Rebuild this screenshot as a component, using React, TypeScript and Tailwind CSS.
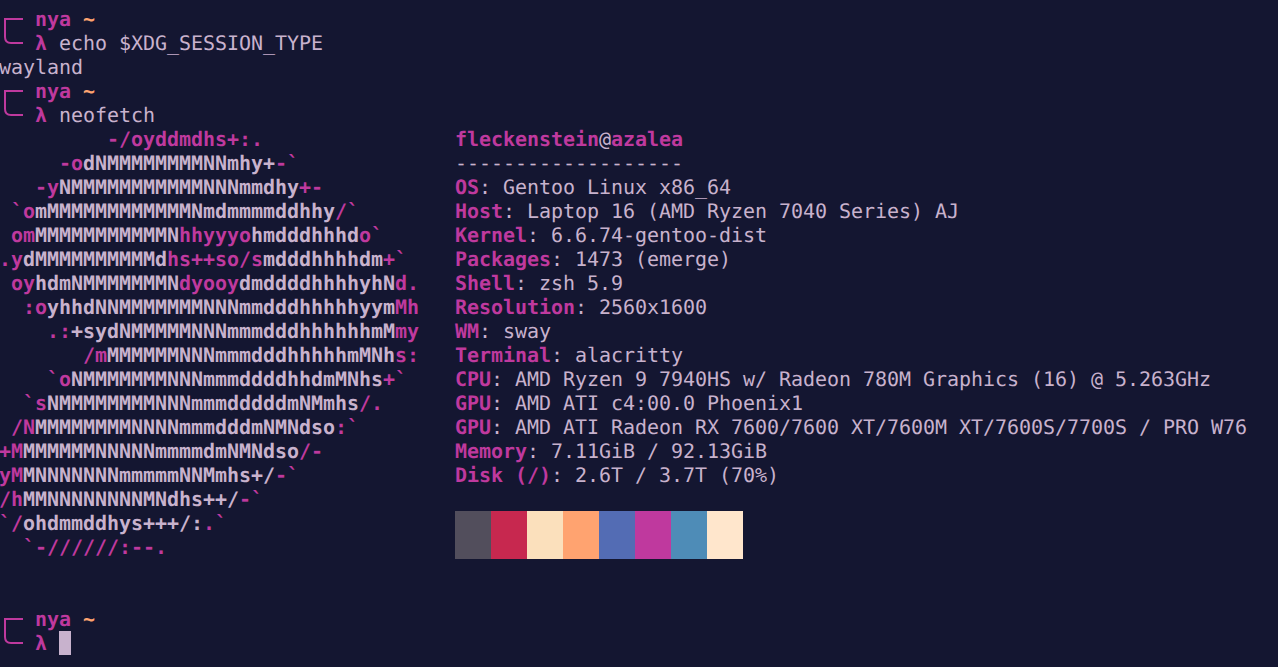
// terminal screenshot: alacritty running neofetch
const MONO = "font-['DejaVu_Sans_Mono',monospace]";

// "|" flips between logo colours, starts on the magenta one
const LOGO = [
  "         -/oyddmdhs+:.",
  "     -o|dNMMMMMMMMNNmhy+|-`",
  "   -y|NMMMMMMMMMMMNNNmmdhy|+-",
  " `o|mMMMMMMMMMMMMNmdmmmmddhhy|/`",
  " om|MMMMMMMMMMMN|hhyyyo|hmdddhhhd|o`",
  ".y|dMMMMMMMMMMd|hs++so/s|mdddhhhhdm|+`",
  " oy|hdmNMMMMMMMN|dyooy|dmddddhhhhyhN|d.",
  "  :o|yhhdNNMMMMMMMNNNmmdddhhhhhyym|Mh",
  "    .:|+sydNMMMMMNNNmmmdddhhhhhhmM|my",
  "       /m|MMMMMMNNNmmmdddhhhhhmMNh|s:",
  "    `o|NMMMMMMMNNNmmmddddhhdmMNhs|+`",
  "  `s|NMMMMMMMMNNNmmmdddddmNMmhs|/.",
  " /N|MMMMMMMMNNNNmmmdddmNMNdso|:`",
  "+M|MMMMMMNNNNNmmmmdmNMNdso|/-",
  "yM|MNNNNNNNmmmmmNNMmhs+/|-`",
  "/h|MMNNNNNNNNMNdhs++/|-`",
  "`/|ohdmmddhys+++/:|.`",
  "  `-//////:--.",
];

const INFO = [
  ["OS", "Gentoo Linux x86_64"],
  ["Host", "Laptop 16 (AMD Ryzen 7040 Series) AJ"],
  ["Kernel", "6.6.74-gentoo-dist"],
  ["Packages", "1473 (emerge)"],
  ["Shell", "zsh 5.9"],
  ["Resolution", "2560x1600"],
  ["WM", "sway"],
  ["Terminal", "alacritty"],
  ["CPU", "AMD Ryzen 9 7940HS w/ Radeon 780M Graphics (16) @ 5.263GHz"],
  ["GPU", "AMD ATI c4:00.0 Phoenix1"],
  ["GPU", "AMD ATI Radeon RX 7600/7600 XT/7600M XT/7600S/7700S / PRO W76"],
  ["Memory", "7.11GiB / 92.13GiB"],
  ["Disk (/)", "2.6T / 3.7T (70%)"],
];

const SWATCHES = [
  "bg-[#524e5c]",
  "bg-[#c7284f]",
  "bg-[#fbe0bc]",
  "bg-[#ffa370]",
  "bg-[#536cb4]",
  "bg-[#bf399e]",
  "bg-[#4e8cb7]",
  "bg-[#ffe6cc]",
];

function Prompt({ children }: { children: React.ReactNode }) {
  return (
    <div className="flex">
      <svg width="36" height="48" viewBox="0 0 36 48" fill="none" className="shrink-0">
        <path
          d="M24 12H6V30Q6 36 12 36H24"
          stroke="#bf399e"
          strokeWidth="2"
        />
      </svg>
      <div className="whitespace-pre">
        <div>
          <span className="font-bold text-[#bf399e]">nya</span>{" "}
          <span className="font-bold text-[#ffa370]">~</span>
        </div>
        <div className="flex">
          <span className="font-bold text-[#bf399e]">λ</span>
          <span> </span>
          {children}
        </div>
      </div>
    </div>
  );
}

function LogoLine({ line }: { line: string }) {
  return (
    <div className="h-6 font-bold">
      {line.split("|").map((part, i) => (
        <span key={i} className={i % 2 === 0 ? "text-[#bf399e]" : "text-[#c8b2cd]"}>
          {part}
        </span>
      ))}
    </div>
  );
}

export default function App() {
  return (
    <div className="h-[667px] w-[1278px] overflow-hidden bg-[#141631]">
      <div
        className={`-ml-px pt-[7px] whitespace-pre text-[20px] leading-6 tracking-[-0.04px] text-[#c8b2cd] antialiased [text-rendering:geometricPrecision] ${MONO}`}
      >
        <Prompt>echo $XDG_SESSION_TYPE</Prompt>
        <div>wayland</div>
        <Prompt>neofetch</Prompt>

        <div className="flex">
          <div className="w-[456px] shrink-0">
            {LOGO.map((line, i) => (
              <LogoLine key={i} line={line} />
            ))}
          </div>
          <div>
            <div>
              <span className="font-bold text-[#bf399e]">fleckenstein</span>@
              <span className="font-bold text-[#bf399e]">azalea</span>
            </div>
            <div>-------------------</div>
            {INFO.map(([label, value], i) => (
              <div key={i}>
                <span className="font-bold text-[#bf399e]">{label}</span>: {value}
              </div>
            ))}
            <div className="mt-6 flex">
              {SWATCHES.map((c) => (
                <div key={c} className={`h-12 w-9 ${c}`} />
              ))}
            </div>
          </div>
        </div>

        <div className="mt-12">
          <Prompt>
            <div className="h-6 w-3 bg-[#c8b2cd]" />
          </Prompt>
        </div>
      </div>
    </div>
  );
}
